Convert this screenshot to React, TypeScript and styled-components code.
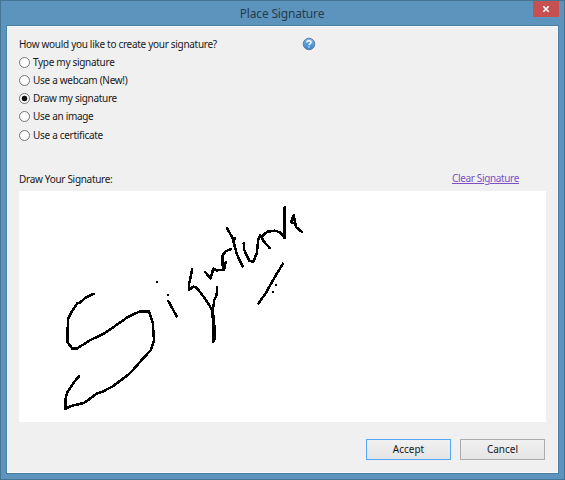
import React, { useState } from "react";
import styled, { createGlobalStyle } from "styled-components";

const GlobalStyle = createGlobalStyle`
  * { box-sizing: border-box; }
  html, body { margin: 0; padding: 0; }
  body { overflow: hidden; }
  body, button { font-family: "Noto Sans", "Open Sans", sans-serif; font-size: 10px; color: #181818; }
`;

const Window = styled.main`
  width: 565px;
  height: 480px;
  padding: 0 5px 5px;
  display: flex;
  flex-direction: column;
  background: #5c94be;
  border: 1px solid #457594;
`;

const TitleBar = styled.header`
  flex: 0 0 24px;
  height: 24px;
  min-height: 0;
  display: grid;
  grid-template-columns: 26px 1fr 26px;
`;

const Title = styled.h1`
  grid-column: 2;
  height: 24px;
  margin: 0 1px 0 0;
  text-align: center;
  font-size: 12px;
  line-height: 25px;
  font-weight: 400;
  letter-spacing: -0.18px;
  color: #263c4d;
`;

const CloseButton = styled.button`
  width: 26px;
  height: 16px;
  padding: 0;
  border: 0;
  background: #c75050;
  display: grid;
  place-items: center;
`;

const Panel = styled.section`
  flex: 1;
  padding: 11px 12px 0;
  display: flex;
  flex-direction: column;
  background: #f0f0f0;
  border: 1px solid #477fa6;
  box-shadow: inset 0 0 0 1px #f8f8f8;
`;

const Question = styled.div`
  height: 15px;
  display: grid;
  grid-template-columns: 283px 14px;
  align-items: start;
`;

const Label = styled.span`
  line-height: 15px;
  white-space: nowrap;
  letter-spacing: -0.3px;
`;

const Options = styled.div`
  padding-top: 1px;
  display: flex;
  flex-direction: column;
`;

const Option = styled.label`
  height: 18.25px;
  display: flex;
  align-items: center;
  gap: 3px;
`;

const Radio = styled.input`
  appearance: none;
  flex: 0 0 11px;
  height: 11px;
  margin: 0;
  border: 1px solid #747474;
  border-radius: 50%;
  background: #fff;
  &:checked {
    background: radial-gradient(circle, #111 0 2.5px, #fff 3.2px);
  }
`;

const CanvasHeading = styled.div`
  height: 15px;
  margin: 27.75px 27px 4px 0;
  display: flex;
  justify-content: space-between;
`;

const ClearLink = styled.button`
  padding: 0;
  border: 0;
  background: none;
  color: #7d50c8;
  line-height: 13px;
  height: 13px;
  letter-spacing: -0.35px;
  text-decoration: underline;
  text-underline-offset: 1px;
`;

const Canvas = styled.div`
  width: 527px;
  height: 231px;
  background: #fff;
`;

const Actions = styled.footer`
  margin-top: 17px;
  padding-right: 1px;
  display: flex;
  justify-content: flex-end;
  gap: 9px;
`;

const ActionButton = styled.button<{ $primary?: boolean }>`
  width: 85px;
  height: 21px;
  padding: 0;
  line-height: 17px;
  border: 1px solid ${({ $primary }) => ($primary ? "#54a7f5" : "#acacac")};
  background: linear-gradient(#f1f1f1, #e5e5e5);
`;

const Drawing = styled.svg`
  display: block;
`;

const strokes = [
  "M93.7 294L90.7 295 85 298 80 302.7 77.3 303.3 70.7 313.3 68 319.3 67.3 341.7 72.3 348.7 77.3 348.3 90 340.3 105 333 128.3 316.7 140 311.3 149 311.3 152.7 322.7 154 340 151 350 141.7 360 130 373.3 113.3 386 103.3 391.3 96.7 393.7 84 403 70.7 406 65.3 409 65.3 400 67 392.7 75 381 79.3 376",
  "M168.3 301L176.7 316.3",
  "M192 269.3L191 275 189 284.3 189.3 289.7 193.3 286.7 196.7 287.7 205 298.7 212.7 310.7 214.3 300 216.7 295 217 286.7",
  "M212.7 310.7L213 342 215 338 214.7 330 213.4 315",
  "M205 272L210.7 278.3 213.3 268.7 216.7 270.3 224 270 225.7 262.3M223.6 269L222.3 264 222.3 255.7 226 251 231 249.3",
  "M227 228.3L232.7 238.3 236.7 254 242.7 266.3M232.7 238.3L235 238.5",
  "M243.7 243.3L244.3 250 249.3 261 253.3 261.7 256.7 253.3 258.3 240 260 235 264 241.7 269.7 248",
  "M262.7 235.7L267.3 231.7 275 230.7 280 232.3 284.7 238 284.7 207",
  "M301.7 231.7L296 227 293.7 215 291 221.7 293 223",
  "M283 263.7L275 276.7 266 292.7 258.7 303.3",
  "M156.7 282.3h.01M168.3 295.3h.01M276 284.7h.01M273 292.3h.01",
];

const choices = [
  "Type my signature",
  "Use a webcam (New!)",
  "Draw my signature",
  "Use an image",
  "Use a certificate",
];

function HelpIcon() {
  return (
    <Drawing width="14" height="14" viewBox="0 0 14 14" aria-label="Help">
      <defs>
        <linearGradient id="help" x2="0" y2="1">
          <stop stopColor="#7eb3e5" />
          <stop offset="1" stopColor="#3684d0" />
        </linearGradient>
      </defs>
      <circle cx="7" cy="7" r="5.8" fill="url(#help)" stroke="#65809f" />
      <path d="M4.9 5.5C5 3.2 9 3.4 9 5.4 9 6.8 7 6.7 7 8.3M7 9.5v1" fill="none" stroke="#fff" strokeWidth="1.5" />
    </Drawing>
  );
}

export default function App() {
  const [choice, setChoice] = useState(choices[2]);
  const [signed, setSigned] = useState(true);
  return (
    <>
      <GlobalStyle />
      <Window>
        <TitleBar>
          <Title>Place Signature</Title>
          <CloseButton aria-label="Close">
            <Drawing width="8" height="8" viewBox="0 0 8 8">
              <path d="M1.3 1.2L6.7 6.8M6.7 1.2L1.3 6.8" stroke="#fff" strokeWidth="1.6" />
            </Drawing>
          </CloseButton>
        </TitleBar>
        <Panel>
          <Question>
            <Label>How would you like to create your signature?</Label>
            <HelpIcon />
          </Question>
          <Options>
            {choices.map((item) => (
              <Option key={item}>
                <Radio type="radio" name="method" checked={choice === item} onChange={() => setChoice(item)} />
                <Label>{item}</Label>
              </Option>
            ))}
          </Options>
          <CanvasHeading>
            <Label>Draw Your Signature:</Label>
            <ClearLink onClick={() => setSigned(false)}>Clear Signature</ClearLink>
          </CanvasHeading>
          <Canvas>
            {signed && (
              <Drawing width="527" height="231" viewBox="19 191 527 231">
                <g fill="none" stroke="#000" strokeWidth="2.5" strokeLinecap="round" strokeLinejoin="round" shapeRendering="crispEdges">
                  {strokes.map((d) => (
                    <path key={d} d={d} />
                  ))}
                </g>
              </Drawing>
            )}
          </Canvas>
          <Actions>
            <ActionButton $primary>Accept</ActionButton>
            <ActionButton>Cancel</ActionButton>
          </Actions>
        </Panel>
      </Window>
    </>
  );
}
